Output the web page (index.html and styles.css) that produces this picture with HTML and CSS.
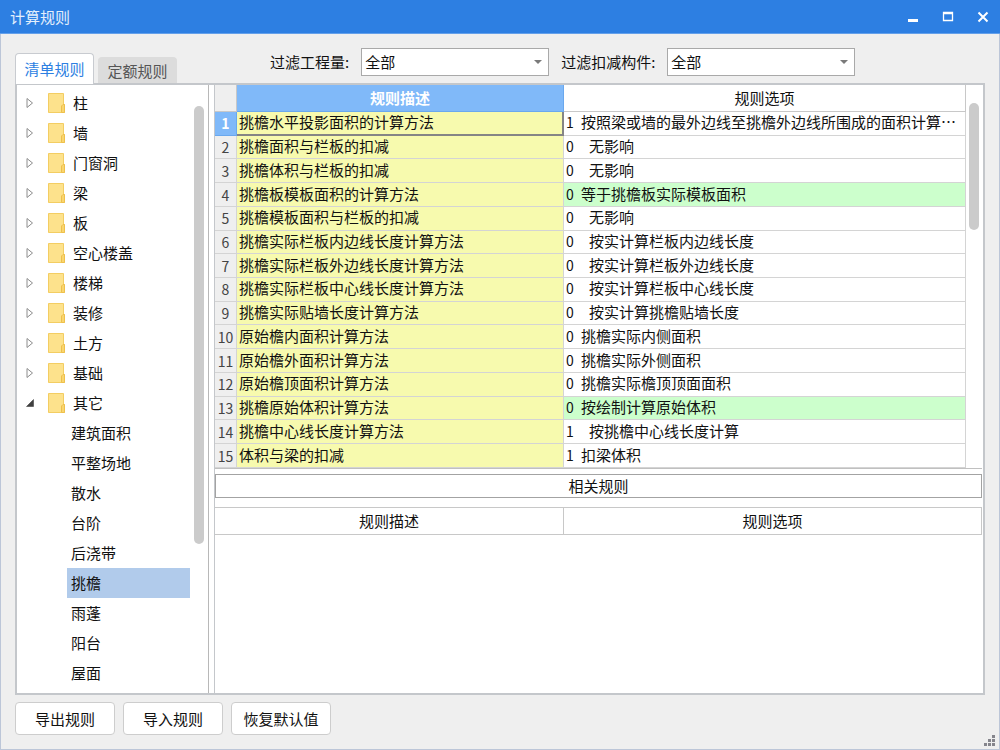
FILE: index.html
```html
<!DOCTYPE html>
<html lang="zh-CN">
<head>
<meta charset="utf-8">
<title>计算规则</title>
<link rel="stylesheet" href="styles.css">
</head>
<body>
<svg class="defs" width="0" height="0" aria-hidden="true">
  <symbol id="folder" viewBox="0 0 17 20">
    <path d="M.5.5h15v11h1v8H.5z" fill="#fde28c" stroke="#f3cd62"/>
    <path d="M13.5 19.5v-6.5l1.5-1.5h1.5v8z" fill="#f9d56e" stroke="#eec04c"/>
  </symbol>
  <symbol id="closed" viewBox="0 0 8 12">
    <path d="M1 1.5v9L6.500 6z" fill="#fff" stroke="#8c8c8c"/>
  </symbol>
  <symbol id="open" viewBox="0 0 8 12">
    <path d="M7.500 2.500v7h-7z" fill="#404040" stroke="#303030" stroke-width=".5"/>
  </symbol>
</svg>
<div class="window">
  <header class="titlebar">
    <h1>计算规则</h1>
    <div class="controls">
      <button type="button" aria-label="最小化"><svg width="12" height="12"><path d="M1 9.500h10" stroke="#fff" stroke-width="3"/></svg></button>
      <button type="button" aria-label="最大化"><svg width="12" height="12"><path d="M1.500 1.500h9v8h-9zM1 2.500h10" fill="none" stroke="#fff" stroke-width="1.300"/></svg></button>
      <button type="button" aria-label="关闭"><svg width="12" height="12"><path d="M1.500 1.500l9 9M10.500 1.500l-9 9" stroke="#fff" stroke-width="2"/></svg></button>
    </div>
  </header>
  <div class="client">
    <div class="toolbar">
      <div class="tabs" role="tablist">
        <button type="button" class="tab active" role="tab" aria-selected="true">清单规则</button>
        <button type="button" class="tab" role="tab" aria-selected="false">定额规则</button>
      </div>
      <div class="filters">
        <label for="quantity">过滤工程量:</label>
        <span class="combo"><select id="quantity"><option>全部</option></select></span>
        <label for="component">过滤扣减构件:</label>
        <span class="combo"><select id="component"><option>全部</option></select></span>
      </div>
    </div>
    <main class="frame">
      <nav class="tree">
        <ul class="nodes">
          <li class="node"><button type="button" aria-label="展开"><svg><use href="#closed"/></svg></button><svg class="folder"><use href="#folder"/></svg>柱</li>
          <li class="node"><button type="button" aria-label="展开"><svg><use href="#closed"/></svg></button><svg class="folder"><use href="#folder"/></svg>墙</li>
          <li class="node"><button type="button" aria-label="展开"><svg><use href="#closed"/></svg></button><svg class="folder"><use href="#folder"/></svg>门窗洞</li>
          <li class="node"><button type="button" aria-label="展开"><svg><use href="#closed"/></svg></button><svg class="folder"><use href="#folder"/></svg>梁</li>
          <li class="node"><button type="button" aria-label="展开"><svg><use href="#closed"/></svg></button><svg class="folder"><use href="#folder"/></svg>板</li>
          <li class="node"><button type="button" aria-label="展开"><svg><use href="#closed"/></svg></button><svg class="folder"><use href="#folder"/></svg>空心楼盖</li>
          <li class="node"><button type="button" aria-label="展开"><svg><use href="#closed"/></svg></button><svg class="folder"><use href="#folder"/></svg>楼梯</li>
          <li class="node"><button type="button" aria-label="展开"><svg><use href="#closed"/></svg></button><svg class="folder"><use href="#folder"/></svg>装修</li>
          <li class="node"><button type="button" aria-label="展开"><svg><use href="#closed"/></svg></button><svg class="folder"><use href="#folder"/></svg>土方</li>
          <li class="node"><button type="button" aria-label="展开"><svg><use href="#closed"/></svg></button><svg class="folder"><use href="#folder"/></svg>基础</li>
          <li class="node"><button type="button" aria-label="折叠"><svg><use href="#open"/></svg></button><svg class="folder"><use href="#folder"/></svg>其它</li>
          <li class="leaf">建筑面积</li>
          <li class="leaf">平整场地</li>
          <li class="leaf">散水</li>
          <li class="leaf">台阶</li>
          <li class="leaf">后浇带</li>
          <li class="leaf selected">挑檐</li>
          <li class="leaf">雨蓬</li>
          <li class="leaf">阳台</li>
          <li class="leaf">屋面</li>
        </ul>
        <div class="track tree-track"><div class="thumb"></div></div>
      </nav>
      <section class="content">
        <div class="rules">
          <table class="grid">
            <colgroup><col class="c-num"><col class="c-desc"><col></colgroup>
            <thead><tr><th class="corner"></th><th class="current">规则描述</th><th>规则选项</th></tr></thead>
            <tbody>
              <tr class="current-row"><th>1</th><td class="desc">挑檐水平投影面积的计算方法</td><td><span class="code">1</span>按照梁或墙的最外边线至挑檐外边线所围成的面积计算…</td></tr>
              <tr><th>2</th><td class="desc">挑檐面积与栏板的扣减</td><td><span class="code wide">0</span>无影响</td></tr>
              <tr><th>3</th><td class="desc">挑檐体积与栏板的扣减</td><td><span class="code wide">0</span>无影响</td></tr>
              <tr class="changed"><th>4</th><td class="desc">挑檐板模板面积的计算方法</td><td><span class="code">0</span>等于挑檐板实际模板面积</td></tr>
              <tr><th>5</th><td class="desc">挑檐模板面积与栏板的扣减</td><td><span class="code wide">0</span>无影响</td></tr>
              <tr><th>6</th><td class="desc">挑檐实际栏板内边线长度计算方法</td><td><span class="code wide">0</span>按实计算栏板内边线长度</td></tr>
              <tr><th>7</th><td class="desc">挑檐实际栏板外边线长度计算方法</td><td><span class="code wide">0</span>按实计算栏板外边线长度</td></tr>
              <tr><th>8</th><td class="desc">挑檐实际栏板中心线长度计算方法</td><td><span class="code wide">0</span>按实计算栏板中心线长度</td></tr>
              <tr><th>9</th><td class="desc">挑檐实际贴墙长度计算方法</td><td><span class="code wide">0</span>按实计算挑檐贴墙长度</td></tr>
              <tr><th>10</th><td class="desc">原始檐内面积计算方法</td><td><span class="code">0</span>挑檐实际内侧面积</td></tr>
              <tr><th>11</th><td class="desc">原始檐外面积计算方法</td><td><span class="code">0</span>挑檐实际外侧面积</td></tr>
              <tr><th>12</th><td class="desc">原始檐顶面积计算方法</td><td><span class="code">0</span>挑檐实际檐顶顶面面积</td></tr>
              <tr class="changed"><th>13</th><td class="desc">挑檐原始体积计算方法</td><td><span class="code">0</span>按绘制计算原始体积</td></tr>
              <tr><th>14</th><td class="desc">挑檐中心线长度计算方法</td><td><span class="code wide">1</span>按挑檐中心线长度计算</td></tr>
              <tr><th>15</th><td class="desc">体积与梁的扣减</td><td><span class="code">1</span>扣梁体积</td></tr>
            </tbody>
          </table>
          <div class="track rules-track"><div class="thumb"></div></div>
        </div>
        <h2 class="related-title">相关规则</h2>
        <div class="related">
          <table class="grid">
            <colgroup><col class="c-related"><col></colgroup>
            <thead><tr><th>规则描述</th><th>规则选项</th></tr></thead>
          </table>
        </div>
      </section>
    </main>
    <footer class="actions">
      <button type="button">导出规则</button>
      <button type="button">导入规则</button>
      <button type="button">恢复默认值</button>
      <svg class="grip" width="11" height="11"><path d="M8 0h3v3h-3zM4 4h3v3h-3zM8 4h3v3h-3zM0 8h3v3h-3zM4 8h3v3h-3zM8 8h3v3h-3z" fill="#85858c"/></svg>
    </footer>
  </div>
</div>
</body>
</html>
```

FILE: styles.css
```css
* { box-sizing: border-box; }

body {
  margin: 0;
  font: 15px/20px "Noto Sans CJK SC", sans-serif;
  color: #111;
}

button, select { font: inherit; color: inherit; }

.defs { position: absolute; }

.window {
  display: flex;
  flex-direction: column;
  min-height: 100vh;
  background: #efefef;
}

.titlebar {
  display: flex;
  align-items: center;
  justify-content: space-between;
  height: 34px;
  padding: 0 11px 0 10px;
  background: #2d7fe2;
  border-bottom: 1px solid #64a0ea;
}

.titlebar h1 {
  margin: 0;
  font-size: 15px;
  font-weight: 400;
  color: #e4effc;
}

.controls { display: flex; gap: 23px; }

.controls button {
  display: flex;
  padding: 0;
  border: 0;
  background: none;
}

.client {
  flex: 1;
  display: flex;
  flex-direction: column;
  padding: 14px 14px 0;
  border: 1px solid #bcc6d8;
  border-top: 0;
}

.toolbar {
  display: flex;
  gap: 93px;
  height: 35px;
}

.tabs {
  display: flex;
  align-items: flex-end;
  gap: 4px;
}

.tab {
  width: 79px;
  height: 26px;
  padding: 0;
  border: 1px solid #dcdcdc;
  border-bottom: 0;
  border-radius: 4px 4px 0 0;
  background: #dcdcdc;
  color: #555;
}

.tab.active {
  height: 31px;
  margin-bottom: -1px;
  border-color: #c8cbd0;
  background: #fff;
  color: #2d7fe2;
  z-index: 1;
}

.filters {
  display: flex;
  align-items: center;
  gap: 12px;
  height: 28px;
}

.combo { display: flex; position: relative; }

.combo select {
  appearance: none;
  width: 188px;
  height: 28px;
  padding: 0 20px 0 3px;
  border: 1px solid #a9a9a9;
  border-radius: 0;
  background: #fff;
}

.combo::after {
  content: "";
  position: absolute;
  right: 7px;
  top: 12px;
  border: 4px solid transparent;
  border-top-color: #7a7a7a;
  border-bottom: 0;
  pointer-events: none;
}

.frame {
  flex: 1;
  display: flex;
  gap: 5px;
  border: 2px solid #c4c7cb;
  background: #fff;
}

.tree {
  display: flex;
  width: 192px;
  border-right: 1px solid #b8b8b8;
}

.nodes {
  flex: 1;
  margin: 0;
  padding: 3px 0 0;
  list-style: none;
}

.node {
  display: flex;
  align-items: center;
  height: 30px;
  padding-left: 9px;
}

.node button {
  display: flex;
  margin-right: 14px;
  padding: 0;
  border: 0;
  background: none;
}

.node button svg { width: 8px; height: 12px; }

.folder {
  width: 17px;
  height: 20px;
  margin-right: 8px;
}

.leaf {
  height: 30px;
  margin-left: 50px;
  padding: 5px 4px;
}

.leaf.selected { background: #b1cbeb; }

.thumb {
  width: 10px;
  border-radius: 5px;
  background: #cbcbcb;
}

.tree-track {
  width: 18px;
  padding: 21px 4px;
}

.tree-track .thumb { height: 438px; }

.content {
  flex: 1;
  display: flex;
  flex-direction: column;
  min-width: 0;
  padding-right: 1px;
  border-left: 1px solid #c4c7cb;
}

.rules {
  display: flex;
  border-bottom: 1px solid #c0c0c0;
}

.grid {
  width: 100%;
  table-layout: fixed;
  border-spacing: 0;
}

.rules .grid { flex: 1; height: 383px; }

.c-num { width: 22px; }
.c-desc { width: 327px; }
.c-related { width: 349px; }

.grid th, .grid td {
  height: 23px;
  padding: 0;
  border: 1px solid #d4d4d4;
  border-width: 0 1px 1px 0;
  line-height: 20px;
  font-weight: 400;
  white-space: nowrap;
  overflow: hidden;
}

.grid thead th {
  height: 27px;
  border-color: #c8c8c8;
}

.grid td { padding: 0 2px 2px; }
.grid .desc { background: #f7faae; }

.grid tbody th {
  background: #efefef;
  color: #444;
  font-size: 14px;
}

.grid thead .corner { background: #efefef; }

.grid thead .current {
  background: #80b9f9;
  border-color: #6aa8ee;
  color: #fff;
  font-weight: 700;
}

.grid .current-row th {
  background: #80b9f9;
  border-color: #6aa8ee;
  color: #fff;
  font-weight: 700;
}

.grid .current-row .desc {
  border-color: #858585;
  border-width: 0 2px 2px 0;
  padding-bottom: 1px;
}

.changed td { background: #cfc; }

.code {
  display: inline-block;
  width: 15px;
  font-size: 14px;
}

.code.wide { width: 23px; }

.rules-track { padding: 18px 3px; }
.rules-track .thumb { height: 127px; }

.related-title {
  margin: 5px 0 9px;
  padding: 1px;
  border: 1px solid #a3a3a3;
  font-size: 15px;
  font-weight: 400;
  line-height: 20px;
  text-align: center;
}

.related {
  flex: 1;
  border-top: 1px solid #c8c8c8;
}

.actions {
  display: flex;
  align-items: flex-start;
  gap: 8px;
  height: 54px;
  padding-top: 7px;
}

.actions button {
  width: 100px;
  height: 33px;
  padding: 0;
  border: 1px solid #cdcdcd;
  border-radius: 4px;
  background: #fff;
}

.grip {
  align-self: flex-end;
  margin: 0 -10px 3px auto;
}
```
